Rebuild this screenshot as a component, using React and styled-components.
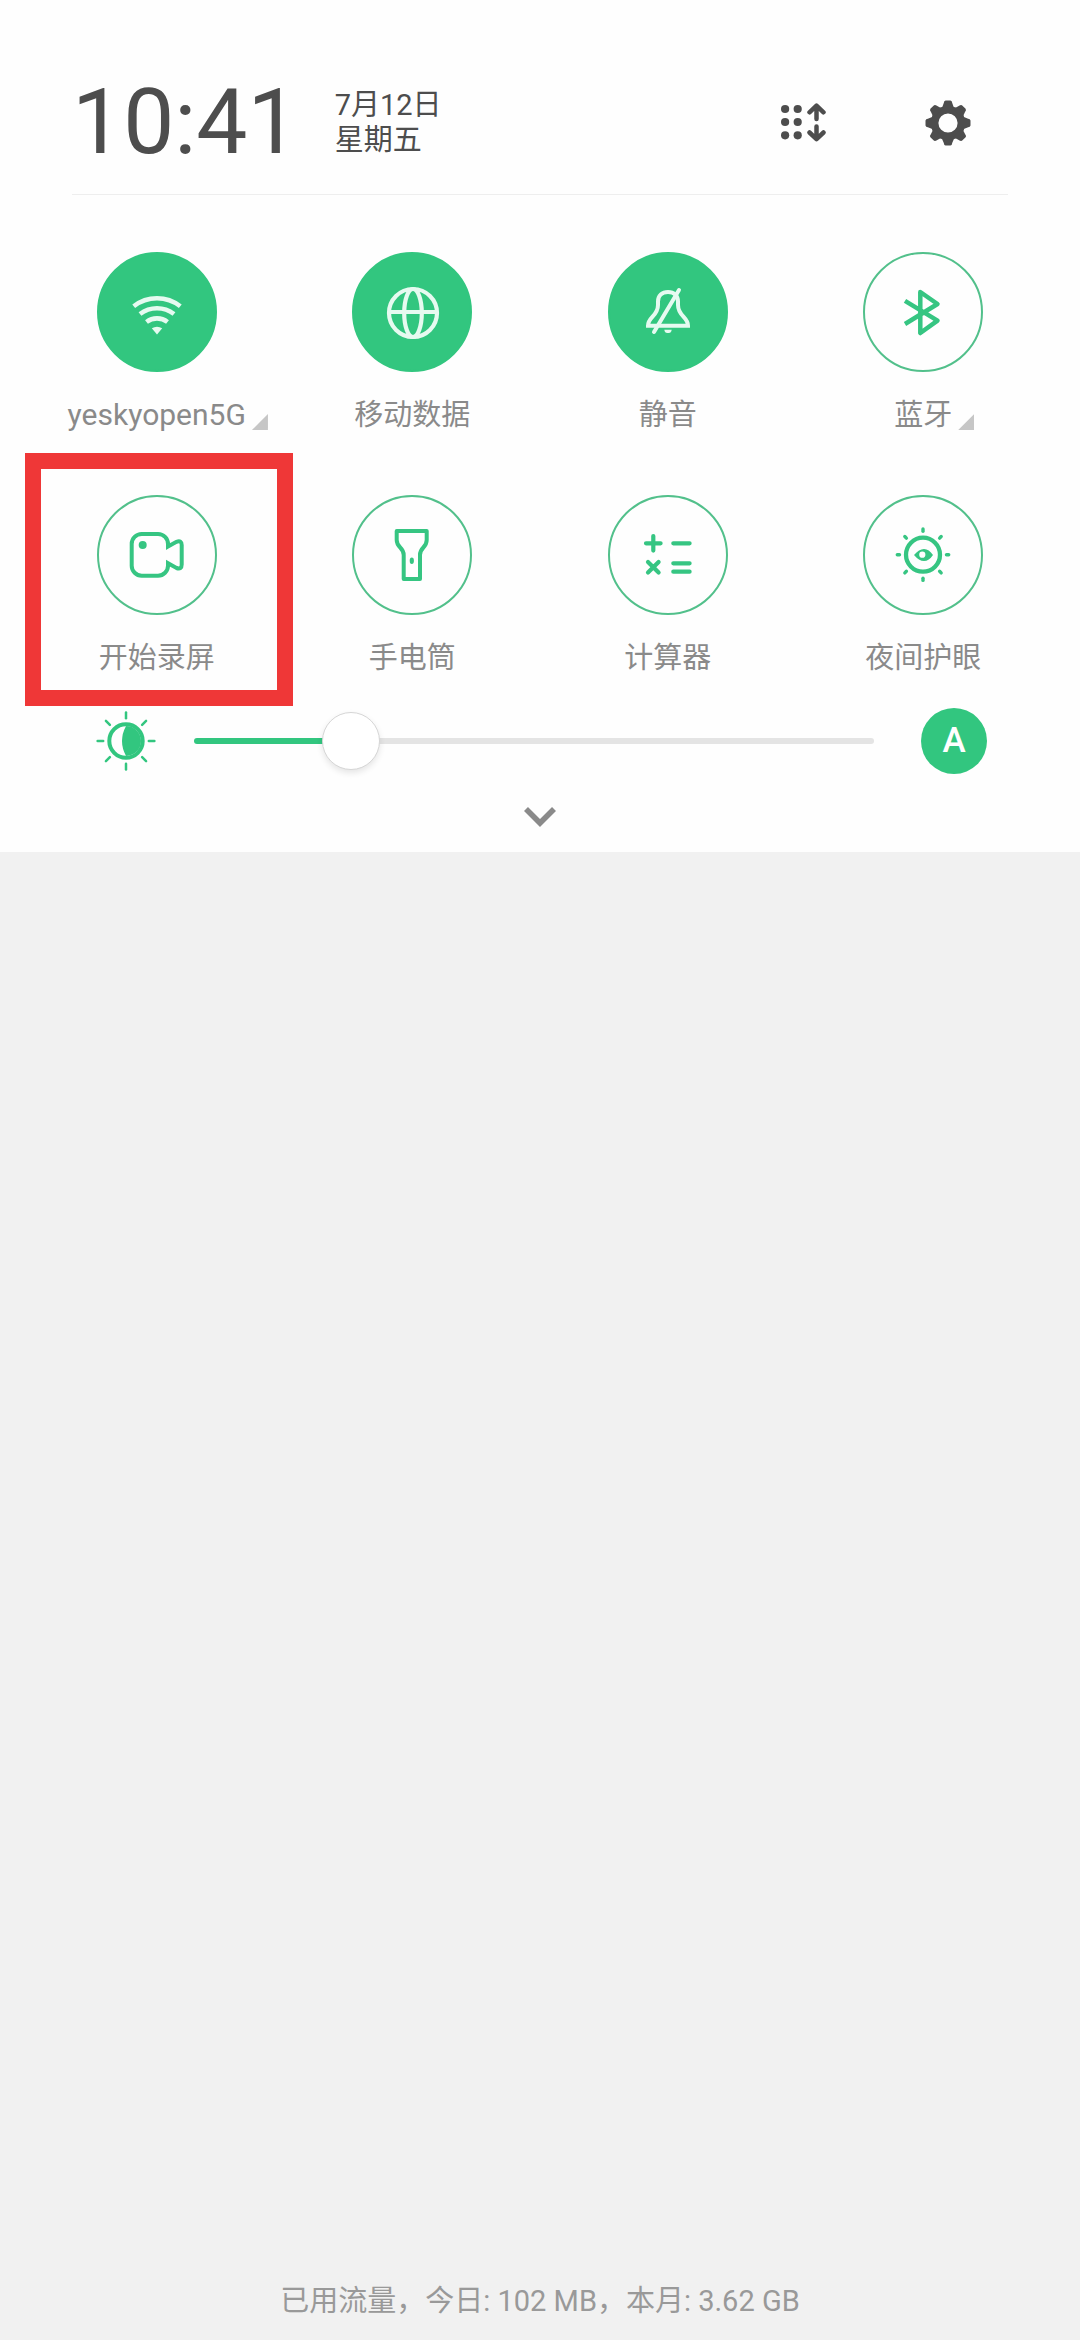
import React, {useState} from 'react';
import styled, {createGlobalStyle} from 'styled-components';

const THUMB = 58;
const TURNS = [0, 45, 90, 135, 180, 225, 270, 315];

const WifiIcon = () => (
    <TileIcon viewBox="0 0 120 120" strokeWidth="4.6">
        <path d="M36.7 54.2A38 38 0 0 1 83.3 54.2" />
        <path d="M43 62A28 28 0 0 1 77 62" />
        <path d="M49.5 70A17 17 0 0 1 70.5 70" />
        <path d="M54.8 76.3Q60 73 65.2 76.3L60 82.4Z" fill="currentColor" stroke="none" />
    </TileIcon>
)

const GlobeIcon = () => (
    <TileIcon viewBox="0 0 120 120" strokeWidth="4.2">
        <circle cx="61" cy="61" r="24" />
        <ellipse cx="61" cy="61" rx="8.8" ry="24" />
        <path d="M37 60H85" />
    </TileIcon>
)

const MuteIcon = () => (
    <TileIcon viewBox="0 0 120 120" strokeWidth="4">
        <path d="M50 53V49.5C50 43.5 54 40 60 40C66 40 70 43.5 70 49.5V53C70 64 80 65 80 73.7H40C40 65 50 64 50 53Z" />
        <path d="M56.3 77.7H63.7Q63.2 81 60.8 81H59.2Q56.8 81 56.3 77.7Z" fill="currentColor" stroke="none" />
        <path d="M71 38L46 80" strokeLinecap="round" />
    </TileIcon>
)

const BluetoothIcon = () => (
    <TileIcon viewBox="0 0 120 120" strokeWidth="4.5" strokeLinejoin="round">
        <path d="M42 48.8L74.5 68.7L57.3 81V40L74.5 52L42 72" />
    </TileIcon>
)

const RecordIcon = () => (
    <TileIcon viewBox="0 0 120 120" strokeWidth="4">
        <path d="M71 51.5L79.5 46.8Q84.7 45 84.7 50V69.5Q84.7 74.8 79.5 73L71 68.2V70.7a10 10 0 0 1-10 10H44.7a10 10 0 0 1-10-10V49a10 10 0 0 1 10-10H61a10 10 0 0 1 10 10Z" />
        <circle cx="45.7" cy="50" r="4" fill="currentColor" stroke="none" />
    </TileIcon>
)

const TorchIcon = () => (
    <TileIcon viewBox="0 0 120 120" strokeWidth="4" strokeLinejoin="round">
        <path d="M44.7 36H74.7V45C74.7 53 68 52 68 60V84H51.7V60C51.7 52 44.7 53 44.7 45Z" />
        <ellipse cx="59.8" cy="65.7" rx="2.1" ry="3.2" fill="currentColor" stroke="none" />
    </TileIcon>
)

const CalculatorIcon = () => (
    <TileIcon viewBox="0 0 120 120" strokeWidth="4.2" strokeLinecap="round">
        <path d="M38 48.3H52.6M45.3 41V55.6" />
        <path d="M65.3 48.3H81.6M65.3 68.3H81.6M65.3 76.7H81.6" />
        <path d="M40 67L50.6 77.6M50.6 67L40 77.6" />
    </TileIcon>
)

const EyeCareIcon = () => (
    <TileIcon viewBox="0 0 120 120" strokeWidth="4.3">
        <circle cx="60" cy="59.7" r="17" />
        {TURNS.map(turn => (
            <path key={turn} d="M60 34V36.2" strokeWidth="3.4" strokeLinecap="round" transform={`rotate(${turn} 60 59.7)`} />
        ))}
        <path
            d="M51 60Q56 54 61 54Q66 54 70 60Q66 66 61 66Q56 66 51 60ZM59.3 56.6a3.1 3.1 0 1 0 0 6.2a3.1 3.1 0 1 0 0-6.2Z"
            fill="currentColor"
            fillRule="evenodd"
            stroke="none"
        />
    </TileIcon>
)

const SunIcon = () => (
    <svg width="60" height="60" viewBox="0 0 60 60" fill="none" stroke="currentColor" aria-hidden="true">
        <circle cx="30" cy="30" r="16.7" strokeWidth="4" />
        <path d="M30 15A15 15 0 0 1 30 45Q22 30 30 15Z" fill="currentColor" stroke="none" />
        {TURNS.map(turn => (
            <path key={turn} d="M30 1.6V7.2" strokeWidth="2.5" strokeLinecap="round" transform={`rotate(${turn} 30 30)`} />
        ))}
    </svg>
)

const SortIcon = () => (
    <svg width="46" height="40" viewBox="0 0 46 40" fill="currentColor" aria-hidden="true">
        {[6, 19, 32.3].map(y => (
            <g key={y}>
                <circle cx="4.1" cy={y} r="4.1" />
                <circle cx="16.7" cy={y} r="4.1" />
            </g>
        ))}
        <path
            d="M28.5 9.3L35.5 2.6L42.5 9.3M35.5 3.5V16M28.5 29.5L35.5 36.2L42.5 29.5M35.5 35V23.5"
            fill="none"
            stroke="currentColor"
            strokeWidth="4.5"
            strokeLinecap="round"
            strokeLinejoin="round"
        />
    </svg>
)

const GearIcon = () => (
    <svg width="46" height="46" viewBox="-23 -23 46 46" fill="currentColor" aria-hidden="true">
        <circle r="13.3" fill="none" stroke="currentColor" strokeWidth="7.4" />
        {TURNS.map(turn => (
            <path
                key={turn}
                d="M-8 -14Q-4.9 -16 -4.4 -19.5Q-4 -22.5 -2.4 -22.5H2.4Q4 -22.5 4.4 -19.5Q4.9 -16 8 -14Z"
                transform={`rotate(${turn})`}
            />
        ))}
    </svg>
)

const tiles = [
    {id: 'wifi', label: 'yeskyopen5G', Icon: WifiIcon, on: true, more: true, latin: true},
    {id: 'data', label: '移动数据', Icon: GlobeIcon, on: true},
    {id: 'mute', label: '静音', Icon: MuteIcon, on: true},
    {id: 'bluetooth', label: '蓝牙', Icon: BluetoothIcon, more: true},
    {id: 'record', label: '开始录屏', Icon: RecordIcon, marked: true},
    {id: 'torch', label: '手电筒', Icon: TorchIcon},
    {id: 'calculator', label: '计算器', Icon: CalculatorIcon},
    {id: 'eyecare', label: '夜间护眼', Icon: EyeCareIcon},
];

function Tile({label, Icon, on, more, latin, marked}) {

    const [active, setActive] = useState(Boolean(on));

    const handleClick = () =>{
        setActive(active => !active);
    }

  return (
    <TileButton type="button" aria-pressed={active} onClick={handleClick}>
        <Circle $on={active}><Icon /></Circle>
        <TileLabel $more={more} $latin={latin}>{label}</TileLabel>
        {marked && <Marker />}
    </TileButton>
  )
}

function App() {

    const [brightness, setBrightness] = useState(205);

    const handleBrightness = (e) =>{
        setBrightness(Number(e.target.value));
    }

  return (
    <Page>
        <GlobalStyle />

        <Panel>
            <Header>
                <Time>10:41</Time>
                <DateText>
                    <p>7月12日</p>
                    <p>星期五</p>
                </DateText>
                <HeaderActions>
                    <IconButton type="button" aria-label="排序"><SortIcon /></IconButton>
                    <IconButton type="button" aria-label="设置"><GearIcon /></IconButton>
                </HeaderActions>
            </Header>

            <Tiles>
                {tiles.map(tile => <Tile key={tile.id} {...tile} />)}
            </Tiles>

            <BrightnessRow>
                <SunIcon />
                <Slider
                    type="range"
                    min="0"
                    max="1000"
                    aria-label="亮度"
                    value={brightness}
                    onChange={handleBrightness}
                    style={{'--level': brightness / 1000}}
                />
                <AutoButton type="button" aria-label="自动亮度">A</AutoButton>
            </BrightnessRow>

            <ExpandButton type="button" aria-label="展开">
                <svg width="32" height="20" viewBox="0 0 32 20" fill="none" stroke="currentColor" strokeWidth="5.6" aria-hidden="true">
                    <path d="M2 2L16 16L30 2" />
                </svg>
            </ExpandButton>
        </Panel>

        <Usage>已用流量，今日: 102 MB，本月: 3.62 GB</Usage>
    </Page>
  )
}

const GlobalStyle = createGlobalStyle`
    * {
        box-sizing: border-box;
    }

    body {
        margin: 0;
        background: #f1f1f1;
        font-family: Roboto, 'Noto Sans CJK SC', sans-serif;
    }

    p {
        margin: 0;
    }

    button {
        border: none;
        padding: 0;
        background: none;
        font-family: inherit;
        cursor: pointer;
    }
`

const Page = styled.div`
    min-height: 100vh;
    display: flex;
    flex-direction: column;
    justify-content: space-between;
`

const Panel = styled.main`
    background: #fefefe;
    color: #8a8a8a;
`

const Header = styled.header`
    margin: 0 72px;
    padding-top: 51px;
    border-bottom: 1px solid #eeeeee;
    display: flex;
    align-items: center;
    color: #4d4d4d;
`

const Time = styled.time`
    font-size: 91px;
    line-height: 143px;
`

const DateText = styled.div`
    margin-left: 36px;
    font-size: 29px;
    line-height: 35px;
`

const HeaderActions = styled.div`
    margin-left: auto;
    margin-right: 14px;
    display: flex;
    gap: 52px;
`

const IconButton = styled.button`
    width: 92px;
    height: 92px;
    display: flex;
    align-items: center;
    justify-content: center;
    color: inherit;
`

const Tiles = styled.div`
    padding: 57px 29px 30px;
    display: grid;
    grid-template-columns: repeat(4, 1fr);
    row-gap: 60px;
`

const TileButton = styled.button`
    position: relative;
    display: flex;
    flex-direction: column;
    align-items: center;
    gap: 23px;
    color: #8a8a8a;
`

const Circle = styled.span`
    width: 120px;
    height: 120px;
    border-radius: 50%;
    border: 2px solid ${props => props.$on ? '#32c67f' : '#52c08b'};
    background: ${props => props.$on ? '#32c67f' : 'none'};
    color: ${props => props.$on ? '#e6faf0' : '#36c582'};
    display: flex;
    align-items: center;
    justify-content: center;
`

const TileIcon = styled.svg`
    width: 120px;
    height: 120px;
    flex: none;
    fill: none;
    stroke: currentColor;
`

const TileLabel = styled.span`
    font-size: ${props => props.$latin ? '30px' : '29px'};
    line-height: 40px;
    white-space: nowrap;

    /* the corner hangs outside, so the text stays centred under its circle */
    &::after {
        content: '';
        display: ${props => props.$more ? 'inline-block' : 'none'};
        width: 16px;
        height: 16px;
        margin: 0 -22px -5px 6px;
        background: #c6c6c6;
        clip-path: polygon(100% 0, 100% 100%, 0 100%);
    }
`

const Marker = styled.span`
    position: absolute;
    inset: -42px -8px -28px -4px;
    border: 16px solid #ef3737;
    pointer-events: none;
`

const BrightnessRow = styled.div`
    padding: 0 93px 0 96px;
    display: flex;
    align-items: center;
    color: #32c67f;
`

const Slider = styled.input`
    flex: 1;
    min-width: 0;
    height: ${THUMB}px;
    margin: 0 47px 0 38px;
    appearance: none;
    background: none;
    cursor: pointer;

    &::-webkit-slider-runnable-track {
        height: 6px;
        border-radius: 3px;
        background: linear-gradient(#32c67f, #32c67f) no-repeat #e4e4e4;
        background-size: calc(${THUMB / 2}px + (100% - ${THUMB}px) * var(--level)) 100%;
    }

    &::-webkit-slider-thumb {
        appearance: none;
        width: ${THUMB}px;
        height: ${THUMB}px;
        margin-top: -26px;
        border: 1px solid #d6d6d6;
        border-radius: 50%;
        background: #ffffff;
        box-shadow: 0 3px 6px rgba(0, 0, 0, 0.1);
    }
`

const AutoButton = styled.button`
    width: 66px;
    height: 66px;
    border-radius: 50%;
    background: #32c67f;
    color: #ffffff;
    font-size: 35px;
    font-weight: 500;
    line-height: 66px;
`

const ExpandButton = styled.button`
    width: 100%;
    height: 78px;
    padding-top: 8px;
    display: flex;
    align-items: center;
    justify-content: center;
    color: #8a8a8a;
`

const Usage = styled.footer`
    padding-bottom: 19px;
    color: #999999;
    font-size: 29px;
    line-height: 40px;
    text-align: center;
`

export default App;
